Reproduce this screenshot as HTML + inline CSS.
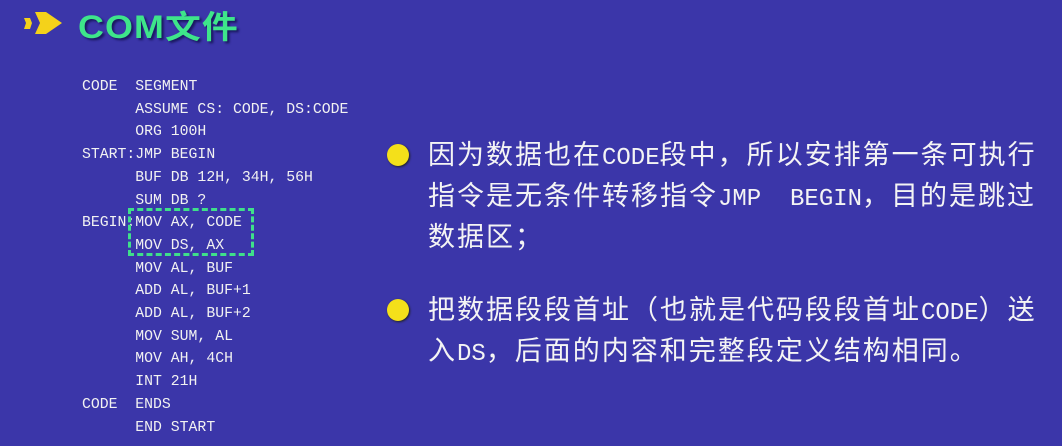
<!DOCTYPE html>
<html><head><meta charset="utf-8"><style>
body{margin:0;width:1062px;height:446px;background:#3b36a9;overflow:hidden;position:relative;font-family:"Liberation Serif","Noto Serif CJK SC",serif;}
.code{position:absolute;left:82px;top:76px;color:#f2f2f2;font-size:14.8px;line-height:22.7px;white-space:pre;font-family:"Liberation Mono",monospace;}
.t{position:absolute;left:428px;color:#f4f4f4;font-size:27px;letter-spacing:2px;height:41px;line-height:41px;white-space:nowrap;font-family:"Noto Sans CJK SC",sans-serif;}
.t span{font-family:"Liberation Mono",monospace;font-size:24px;letter-spacing:0px;line-height:0;}
.b{position:absolute;width:22px;height:22px;border-radius:50%;background:#f4e01a;box-shadow:1px 1px 2px #222;}
.title{position:absolute;left:78px;top:2px;font-size:32px;color:#3ee58a;font-weight:bold;font-family:"Liberation Sans","Noto Sans CJK SC",sans-serif;text-shadow:2px 2px 2px #1a1860;letter-spacing:1px;transform:scaleX(1.12);transform-origin:left top;}
.box{position:absolute;left:128px;top:208px;width:120px;height:42px;border:3px dashed #3fe08a;}
</style></head><body>
<svg style="position:absolute;left:22px;top:8px" width="42" height="30" viewBox="0 0 42 30"><path d="M2 10 L8 10 L10 15 L8 21 L2 21 L4 15Z" fill="#f4d21a"/><path d="M13 4 L24 4 L40 15 L24 26 L13 26 L18 15Z" fill="#f4d21a"/></svg>
<div class="title">COM文件</div>
<div class="code">CODE  SEGMENT
      ASSUME CS: CODE, DS:CODE
      ORG 100H
START:JMP BEGIN
      BUF DB 12H, 34H, 56H
      SUM DB ?
BEGIN:MOV AX, CODE
      MOV DS, AX
      MOV AL, BUF
      ADD AL, BUF+1
      ADD AL, BUF+2
      MOV SUM, AL
      MOV AH, 4CH
      INT 21H
CODE  ENDS
      END START</div>
<div class="box"></div>
<div class="b" style="left:387px;top:144px"></div>
<div class="t" style="top:132px">因为数据也在<span>CODE</span>段中，所以安排第一条可执行</div>
<div class="t" style="top:173px">指令是无条件转移指令<span>JMP&nbsp;&nbsp;BEGIN</span>，目的是跳过</div>
<div class="t" style="top:214px">数据区；</div>
<div class="b" style="left:387px;top:299px"></div>
<div class="t" style="top:287px">把数据段段首址（也就是代码段段首址<span>CODE</span>）送</div>
<div class="t" style="top:328px">入<span>DS</span>，后面的内容和完整段定义结构相同。</div>
</body></html>
